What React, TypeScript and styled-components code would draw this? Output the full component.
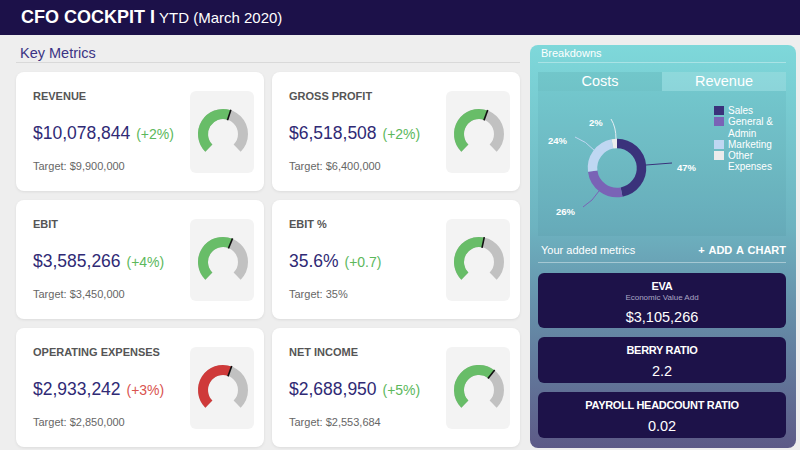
import React from 'react';
import styled, { createGlobalStyle } from 'styled-components';

const GlobalStyle = createGlobalStyle`
  body {
    margin: 0;
    background: #eeeeee;
    font-family: 'Liberation Sans', Arial, sans-serif;
  }
`;

const Page = styled.div`
  width: 800px;
  height: 450px;
  display: flex;
  flex-direction: column;
  overflow: hidden;
`;

const Header = styled.header`
  height: 35px;
  background: #1c1149;
  color: #fff;
  display: flex;
  align-items: center;
  padding-left: 21px;
`;

const Title = styled.span`
  font-size: 18px;
  font-weight: bold;
`;

const Period = styled.span`
  font-size: 15px;
  margin-left: 4px;
`;

const Main = styled.main`
  display: flex;
  gap: 10px;
  padding: 10px 4px 0 16px;
`;

const LeftColumn = styled.section`
  width: 504px;
`;

const SectionHeading = styled.h2`
  margin: 0;
  font-size: 14.5px;
  font-weight: normal;
  line-height: 17px;
  color: #3b3484;
  padding-left: 4px;
  border-bottom: 1px solid #d9d9d9;
`;

const MetricGrid = styled.div`
  margin-top: 9px;
  display: grid;
  grid-template-columns: 248px 248px;
  grid-auto-rows: 119px;
  column-gap: 8px;
  row-gap: 9px;
`;

const Card = styled.div`
  background: #fff;
  border-radius: 8px;
  box-shadow: 0 1px 3px rgba(0, 0, 0, 0.08);
  display: flex;
  align-items: center;
  padding: 0 10px 0 17px;
`;

const Info = styled.div`
  flex: 1;
  align-self: flex-start;
  padding-top: 17px;
  display: flex;
  flex-direction: column;
`;

const MetricName = styled.div`
  font-size: 11px;
  font-weight: bold;
  line-height: 14px;
  color: #555;
`;

const MetricValue = styled.div`
  margin-top: 19px;
  font-size: 17.5px;
  line-height: 22px;
  color: #2f2a75;
  white-space: nowrap;
`;

const Change = styled.span<{ $bad?: boolean }>`
  font-size: 14px;
  margin-left: 1px;
  color: ${(p) => (p.$bad ? '#d9534f' : '#5cb85c')};
`;

const Target = styled.div`
  margin-top: 14px;
  font-size: 11px;
  line-height: 14px;
  color: #666;
`;

const GaugeBox = styled.div`
  width: 64px;
  height: 82px;
  background: #f3f3f3;
  border-radius: 6px;
  flex-shrink: 0;
`;

const Panel = styled.aside`
  width: 266px;
  height: 403px;
  box-sizing: border-box;
  border-radius: 8px;
  background: linear-gradient(180deg, #7ed8da 0%, #6db3c0 45%, #6690aa 65%, #5d5a87 100%);
  padding: 0 10px 8px 8px;
  display: flex;
  flex-direction: column;
  color: #fff;
`;

const PanelHeading = styled.div`
  font-size: 11px;
  line-height: 17px;
  padding-left: 3px;
  border-bottom: 1px solid rgba(255, 255, 255, 0.35);
`;

const Tabs = styled.div`
  margin-top: 9px;
  display: grid;
  grid-template-columns: 1fr 1fr;
  height: 19px;
`;

const Tab = styled.div<{ $active?: boolean }>`
  font-size: 14.5px;
  line-height: 19px;
  text-align: center;
  background: ${(p) => (p.$active ? 'rgba(0, 60, 70, 0.08)' : 'rgba(255, 255, 255, 0.14)')};
`;

const ChartBody = styled.div`
  height: 145px;
  display: flex;
  background: rgba(0, 60, 70, 0.05);
`;

const Legend = styled.div`
  padding-top: 14px;
  width: 62px;
  display: flex;
  flex-direction: column;
`;

const LegendItem = styled.div`
  display: flex;
  gap: 4px;
  font-size: 10px;
  line-height: 11.3px;
`;

const Swatch = styled.span<{ $color: string }>`
  width: 10px;
  height: 9px;
  margin-top: 1px;
  flex-shrink: 0;
  background: ${(p) => p.$color};
`;

const AddedRow = styled.div`
  height: 27px;
  padding-top: 2px;
  box-sizing: border-box;
  display: flex;
  align-items: center;
  justify-content: space-between;
  font-size: 11px;
  border-bottom: 1px solid rgba(255, 255, 255, 0.4);
  padding-left: 3px;
`;

const AddChart = styled.span`
  font-weight: bold;
  word-spacing: 1px;
`;

const KpiList = styled.div`
  margin-top: 10px;
  display: flex;
  flex-direction: column;
  gap: 9px;
`;

const Kpi = styled.div<{ $tall?: boolean }>`
  height: ${(p) => (p.$tall ? 55 : 46)}px;
  box-sizing: border-box;
  background: #1d1249;
  border-radius: 6px;
  padding-top: 7px;
  display: flex;
  flex-direction: column;
  align-items: center;
`;

const KpiName = styled.div`
  font-size: 11px;
  font-weight: bold;
  line-height: 13px;
  letter-spacing: -0.3px;
`;

const KpiSub = styled.div`
  font-size: 8px;
  line-height: 10px;
  color: #aaa6c4;
`;

const KpiValue = styled.div`
  margin-top: 5px;
  font-size: 14.5px;
  line-height: 18px;
`;

const polar = (cx: number, cy: number, r: number, deg: number) => {
  const a = (deg * Math.PI) / 180;
  return [cx + r * Math.sin(a), cy - r * Math.cos(a)];
};

const arc = (cx: number, cy: number, r: number, from: number, to: number) => {
  const [x1, y1] = polar(cx, cy, r, from);
  const [x2, y2] = polar(cx, cy, r, to);
  const large = to - from > 180 ? 1 : 0;
  return `M${x1} ${y1} A${r} ${r} 0 ${large} 1 ${x2} ${y2}`;
};

function Gauge({ angle, bad }: { angle: number; bad?: boolean }) {
  const cx = 33;
  const cy = 43;
  const [tx1, ty1] = polar(cx, cy, 14.5, angle);
  const [tx2, ty2] = polar(cx, cy, 25.5, angle);
  return (
    <GaugeBox>
      <svg width="64" height="82" viewBox="0 0 64 82">
        <path d={arc(cx, cy, 20, -135, 135)} fill="none" stroke="#c1c1c1" strokeWidth="10" />
        <path d={arc(cx, cy, 20, -135, angle)} fill="none" stroke={bad ? '#cf3a3a' : '#68bd68'} strokeWidth="10" />
        <line x1={tx1} y1={ty1} x2={tx2} y2={ty2} stroke="#111" strokeWidth="1.6" />
      </svg>
    </GaugeBox>
  );
}

const metrics = [
  { name: 'REVENUE', value: '$10,078,844', change: '(+2%)', target: 'Target: $9,900,000', angle: 18 },
  { name: 'GROSS PROFIT', value: '$6,518,508', change: '(+2%)', target: 'Target: $6,400,000', angle: 20 },
  { name: 'EBIT', value: '$3,585,266', change: '(+4%)', target: 'Target: $3,450,000', angle: 22 },
  { name: 'EBIT %', value: '35.6%', change: '(+0.7)', target: 'Target: 35%', angle: 12 },
  { name: 'OPERATING EXPENSES', value: '$2,933,242', change: '(+3%)', target: 'Target: $2,850,000', angle: 20, bad: true },
  { name: 'NET INCOME', value: '$2,688,950', change: '(+5%)', target: 'Target: $2,553,684', angle: 38 },
];

const slices = [
  { label: 'Sales', pct: 47, color: '#3a327b' },
  { label: 'General & Admin', pct: 26, color: '#7a63b6' },
  { label: 'Marketing', pct: 24, color: '#bfd7f2' },
  { label: 'Other Expenses', pct: 3, color: '#ececec' },
];

function Donut() {
  const cx = 79;
  const cy = 77;
  let start = 0;
  return (
    <svg width="176" height="145" viewBox="0 0 176 145">
      {slices.map((s) => {
        const from = start;
        start += (s.pct / 100) * 360;
        return <path key={s.label} d={arc(cx, cy, 24.5, from, start)} fill="none" stroke={s.color} strokeWidth="9.5" />;
      })}
      <path d="M108 74 L134 72" stroke="#3a327b" strokeWidth="1" fill="none" />
      <path d="M61 100 Q55 110 45 116" stroke="#7a63b6" strokeWidth="1" fill="none" />
      <path d="M57 60 Q48 50 37 46" stroke="#bfd7f2" strokeWidth="1" fill="none" />
      <path d="M78 48 Q78 36 73 28" stroke="#e4eef4" strokeWidth="1" fill="none" />
      <g fill="#fff" fontSize="9.5" fontWeight="bold" fontFamily="'Liberation Sans', Arial, sans-serif">
        <text x="139" y="79.5">47%</text>
        <text x="18" y="123.5">26%</text>
        <text x="10" y="52.5">24%</text>
        <text x="51" y="34.5">2%</text>
      </g>
    </svg>
  );
}

export default function App() {
  return (
    <Page>
      <GlobalStyle />
      <Header>
        <Title>CFO COCKPIT I</Title>
        <Period>YTD (March 2020)</Period>
      </Header>
      <Main>
        <LeftColumn>
          <SectionHeading>Key Metrics</SectionHeading>
          <MetricGrid>
            {metrics.map((m) => (
              <Card key={m.name}>
                <Info>
                  <MetricName>{m.name}</MetricName>
                  <MetricValue>
                    {m.value} <Change $bad={m.bad}>{m.change}</Change>
                  </MetricValue>
                  <Target>{m.target}</Target>
                </Info>
                <Gauge angle={m.angle} bad={m.bad} />
              </Card>
            ))}
          </MetricGrid>
        </LeftColumn>
        <Panel>
          <PanelHeading>Breakdowns</PanelHeading>
          <Tabs>
            <Tab $active>Costs</Tab>
            <Tab>Revenue</Tab>
          </Tabs>
          <ChartBody>
            <Donut />
            <Legend>
              {slices.map((s) => (
                <LegendItem key={s.label}>
                  <Swatch $color={s.color} />
                  <span>{s.label}</span>
                </LegendItem>
              ))}
            </Legend>
          </ChartBody>
          <AddedRow>
            <span>Your added metrics</span>
            <AddChart>+ ADD A CHART</AddChart>
          </AddedRow>
          <KpiList>
            <Kpi $tall>
              <KpiName>EVA</KpiName>
              <KpiSub>Economic Value Add</KpiSub>
              <KpiValue>$3,105,266</KpiValue>
            </Kpi>
            <Kpi>
              <KpiName>BERRY RATIO</KpiName>
              <KpiValue>2.2</KpiValue>
            </Kpi>
            <Kpi>
              <KpiName>PAYROLL HEADCOUNT RATIO</KpiName>
              <KpiValue>0.02</KpiValue>
            </Kpi>
          </KpiList>
        </Panel>
      </Main>
    </Page>
  );
}
